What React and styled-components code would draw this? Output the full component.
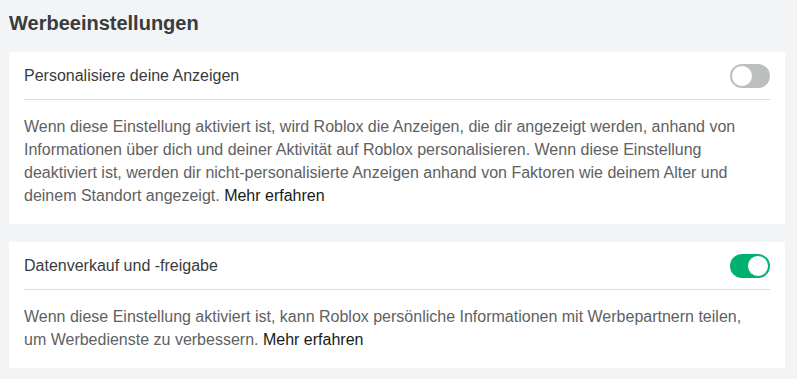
import React, { useState } from 'react'
import styled, { createGlobalStyle } from 'styled-components'

const GlobalStyle = createGlobalStyle`
  html, body {
    margin: 0;
    padding: 0;
    background: #f2f4f5;
  }
  body {
    font-family: 'Liberation Sans', Arial, sans-serif;
  }
`

const Page = styled.div`
  padding: 8px 12px 0 9px;
`

const Heading = styled.h2`
  margin: 0 0 14px;
  color: #393b3d;
  font-size: 20px;
  font-weight: 700;
  line-height: 30px;
`

const Card = styled.section`
  background: #fff;
  padding: 0 15px 17px;
  margin-bottom: 18px;
`

const Row = styled.div`
  display: flex;
  align-items: center;
  justify-content: space-between;
  height: 47px;
  border-bottom: 1px solid #d9dadb;
`

const Label = styled.div`
  color: #393b3d;
  font-size: 16px;
`

const Track = styled.button`
  position: relative;
  width: 40px;
  height: 24px;
  padding: 0;
  border: 0;
  border-radius: 12px;
  background: ${({ $on }) => ($on ? '#00b06f' : '#bdbebe')};
  cursor: pointer;
`

const Knob = styled.span`
  position: absolute;
  top: 1px;
  left: ${({ $on }) => ($on ? '17px' : '1px')};
  width: 20px;
  height: 20px;
  border-radius: 50%;
  background: #fff;
  border: 1px solid ${({ $on }) => ($on ? '#00b06f' : '#bdbebe')};
`

const Text = styled.p`
  margin: 15px 0 0;
  color: #606162;
  font-size: 16px;
  line-height: 23px;
`

const More = styled.a`
  color: #191919;
  font-weight: 500;
  text-decoration: none;
  cursor: pointer;
`

const Toggle = ({ initial }) => {
  const [on, setOn] = useState(initial)
  return (
    <Track $on={on} onClick={() => setOn(v => !v)}>
      <Knob $on={on} />
    </Track>
  )
}

// lines are kept as in the original wrap
const settings = [
  {
    key: 'personal',
    label: 'Personalisiere deine Anzeigen',
    on: false,
    lines: [
      'Wenn diese Einstellung aktiviert ist, wird Roblox die Anzeigen, die dir angezeigt werden, anhand von',
      'Informationen über dich und deiner Aktivität auf Roblox personalisieren. Wenn diese Einstellung',
      'deaktiviert ist, werden dir nicht-personalisierte Anzeigen anhand von Faktoren wie deinem Alter und',
      'deinem Standort angezeigt.',
    ],
  },
  {
    key: 'sale',
    label: 'Datenverkauf und -freigabe',
    on: true,
    lines: [
      'Wenn diese Einstellung aktiviert ist, kann Roblox persönliche Informationen mit Werbepartnern teilen,',
      'um Werbedienste zu verbessern.',
    ],
  },
]

export default function App() {
  return (
    <Page>
      <GlobalStyle />
      <Heading>Werbeeinstellungen</Heading>
      {settings.map(item => (
        <Card key={item.key}>
          <Row>
            <Label>{item.label}</Label>
            <Toggle initial={item.on} />
          </Row>
          <Text>
            {item.lines.map((line, i) => (
              <React.Fragment key={i}>
                {i > 0 && <br />}
                {line}
              </React.Fragment>
            ))}{' '}
            <More>Mehr erfahren</More>
          </Text>
        </Card>
      ))}
    </Page>
  )
}
